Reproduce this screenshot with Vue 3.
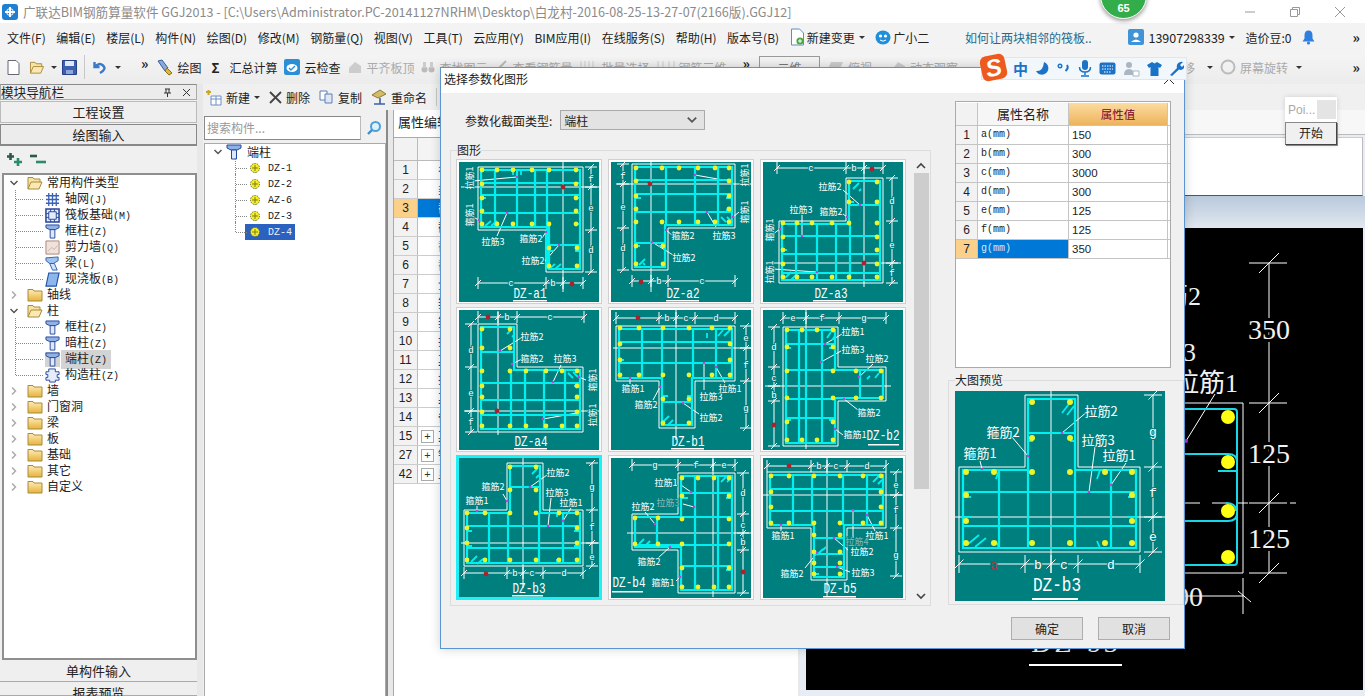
<template>
  <div class="app">
    <svg class="defs" width="0" height="0">
      <defs>
        <linearGradient id="fold" x1="0" y1="0" x2="0" y2="1"><stop offset="0" stop-color="#fdeeb4" /><stop offset="1" stop-color="#e8b13c" /></linearGradient>
      </defs>
      <symbol id="i-col" viewBox="0 0 16 16"><path d="M1 1h14v3l-4 2H5L1 4z" fill="#8fb0e8" stroke="#24499a" /><path d="M5.5 6h5v9h-5z" fill="#dfe8fa" stroke="#24499a" /></symbol>
      <symbol id="i-folder" viewBox="0 0 16 16"><path d="M1 4V2.5h5L7 4h8v10H1z" fill="url(#fold)" stroke="#a98a3b" /></symbol>
      <symbol id="i-open" viewBox="0 0 16 16"><path d="M1 14V2.5h5L7 4h6v3" fill="#f7e3a2" stroke="#a98a3b" /><path d="M1 14l3-7h11l-3 7z" fill="#fbe9b3" stroke="#a98a3b" /></symbol>
      <symbol id="i-grid" viewBox="0 0 16 16"><path d="M1 4h14M1 8h14M1 12h14M4 1v14M8 1v14M12 1v14" stroke="#3a62b4" stroke-width="1.4" fill="none" /></symbol>
      <symbol id="i-raft" viewBox="0 0 16 16"><path d="M1 1h14v14H1z" fill="#e4ecfa" stroke="#28459a" stroke-width="1.6" /><path d="M4 4h8v8H4zM1 6h3M12 6h3M1 10h3M12 10h3M6 1v3M10 1v3M6 12v3M10 12v3" fill="none" stroke="#28459a" /></symbol>
      <symbol id="i-wall" viewBox="0 0 16 16"><path d="M1 1h14v14H1z" fill="#eee2da" stroke="#a88478" /><path d="M3 12l4-4 3 2 3-4" fill="none" stroke="#c9b3aa" /></symbol>
      <symbol id="i-beam" viewBox="0 0 16 16"><path d="M1 2l13-1v4L9 8H5L1 5z" fill="#9ec3ee" stroke="#2d5fae" /><path d="M5 8h5l3 7H8z" fill="#cfe2f8" stroke="#2d5fae" /></symbol>
      <symbol id="i-slab" viewBox="0 0 16 16"><path d="M4 1h11l-3 14H1z" fill="#8db7ec" stroke="#1f4fa6" stroke-width="1.2" /></symbol>
      <symbol id="i-cons" viewBox="0 0 16 16"><path d="M4 1h7v3h4v3h-2v3h2v3h-4v2H5v-2H1v-3h2V7H1V4h3z" fill="#e5ecfa" stroke="#28459a" /></symbol>
      <symbol id="i-gear" viewBox="0 0 12 12"><circle cx="6" cy="6" r="4.5" fill="#f6f02c" stroke="#6d6d1c" stroke-dasharray="1.5 1" /><path d="M3 6h6M6 3v6" stroke="#7a7a20" /></symbol>
      <symbol id="i-caret" viewBox="0 0 10 10"><path d="M1.5 3l3.5 3.5L8.5 3" fill="none" stroke="#555" stroke-width="1.5" /></symbol>
      <symbol id="i-right" viewBox="0 0 10 10"><path d="M3 1.5L6.5 5 3 8.5" fill="none" stroke="#aaa" stroke-width="1.5" /></symbol>
    </svg>

    <!-- title bar -->
    <header class="title">
      <svg class="logo" width="16" height="16" viewBox="0 0 16 16"><rect width="16" height="16" rx="3" fill="#1f7fd0" /><path d="M3 8h10M8 3v10" stroke="#fff" stroke-width="2" /><circle cx="8" cy="8" r="3.4" fill="none" stroke="#fff" /></svg>
      <span class="title-text">广联达BIM钢筋算量软件 GGJ2013 - [C:\Users\Administrator.PC-20141127NRHM\Desktop\白龙村-2016-08-25-13-27-07(2166版).GGJ12]</span>
      <div class="win-btns">
        <svg width="12" height="12" viewBox="0 0 12 12"><path d="M1 6h10" stroke="#999" /></svg>
        <svg width="12" height="12" viewBox="0 0 12 12"><path d="M1.5 3.5h7v7h-7zM3.5 3.5v-2h7v7h-2" fill="none" stroke="#999" /></svg>
        <svg width="12" height="12" viewBox="0 0 12 12"><path d="M1 1l10 10M11 1L1 11" stroke="#999" /></svg>
      </div>
    </header>

    <!-- menu -->
    <nav class="menu">
      <span v-for="m in menus" :key="m">{{ m }}</span>
      <span class="menu-ic">
        <svg width="15" height="18" viewBox="0 0 15 18"><path d="M1.5 1h8l4 4v12h-12z" fill="#fff" stroke="#5b8fc7" /><circle cx="10" cy="13" r="3.6" fill="#4aa83f" /><path d="M10 11v4M8 13h4" stroke="#fff" /></svg>
        新建变更 <i class="drop"></i>
      </span>
      <span class="menu-ic">
        <svg width="16" height="15" viewBox="0 0 16 15"><ellipse cx="8" cy="7.5" rx="7.5" ry="7" fill="#1f8fdb" /><circle cx="5.5" cy="6" r="1.6" fill="#fff" /><circle cx="10.5" cy="6" r="1.6" fill="#fff" /><path d="M5 10q3 2.4 6 0" stroke="#fff" fill="none" /></svg>
        广小二
      </span>
      <span class="menu-link">如何让两块相邻的筏板..</span>
      <span class="menu-user">
        <svg width="16" height="16" viewBox="0 0 16 16"><rect width="16" height="16" rx="2" fill="#3f93d6" /><circle cx="8" cy="6" r="2.6" fill="#fff" /><path d="M3 13q5-5 10 0z" fill="#fff" /></svg>
        13907298339 <i class="drop"></i>
      </span>
      <span>造价豆:0</span>
      <svg width="13" height="15" viewBox="0 0 13 15"><path d="M6.5 0.5q4 0 4 5v3l2 3H0.5l2-3v-3q0-5 4-5z" fill="#2f7fe0" /><circle cx="6.5" cy="13" r="1.6" fill="#2f7fe0" /></svg>
      <b class="more end">»</b>
    </nav>

    <!-- toolbar -->
    <div class="tools">
      <svg width="13" height="15" viewBox="0 0 13 15"><path d="M1 .5h8l3 3v11H1z" fill="#fff" stroke="#667" /></svg>
      <svg class="t-open" width="18" height="15" viewBox="0 0 16 16"><use href="#i-open" /></svg>
      <i class="drop t-d1"></i>
      <svg class="t-save" width="15" height="15" viewBox="0 0 15 15"><path d="M.5.5h14v14H.5z" fill="#3c5fb0" stroke="#24408a" /><path d="M3 1h9v5H3z" fill="#dfe8f6" /><path d="M4 10h7v4H4z" fill="#8ea6d8" /></svg>
      <i class="sep"></i>
      <svg width="14" height="15" viewBox="0 0 14 15"><path d="M2.5 2v5h5M3 7q4-5 8-1.5T8 13" fill="none" stroke="#3a78c9" stroke-width="2.4" /></svg>
      <i class="drop t-d2"></i>
      <b class="more t-more">»</b>
      <span class="tool t1"><svg width="17" height="17" viewBox="0 0 17 17"><path d="M2 2l4-1 6 8-3 3z" fill="#8aaad8" stroke="#3a5a9c" /><path d="M11 9l5 5-3 2-4-4z" fill="#e0b83c" stroke="#8a6d1d" /></svg>绘图</span>
      <span class="tool t2"><b class="sigma">Σ</b>汇总计算</span>
      <span class="tool t3"><svg width="16" height="16" viewBox="0 0 16 16"><rect width="16" height="16" rx="2" fill="#2c8fd6" /><ellipse cx="8" cy="9" rx="5.5" ry="4" fill="#fff" /><path d="M5 9l2 2 4-4" fill="none" stroke="#2c8fd6" stroke-width="1.4" /></svg>云检查</span>
      <span class="tool dim t4"><svg width="14" height="14" viewBox="0 0 14 14"><path d="M1 8l6-6 6 4v7H1z" fill="#ccc" /></svg>平齐板顶</span>
      <span class="tool dim t5"><svg width="14" height="14" viewBox="0 0 14 14"><circle cx="3.5" cy="9.5" r="3" fill="#bbb" /><circle cx="10.5" cy="9.5" r="3" fill="#bbb" /><path d="M2 2h3v6H2zM9 2h3v6H9z" fill="#ccc" /></svg>查找图元</span>
      <span class="tool dim t6"><svg width="14" height="14" viewBox="0 0 14 14"><path d="M1 12L12 1" stroke="#bbb" stroke-width="2" /></svg>查看钢筋量</span>
      <span class="tool dim t7"><svg width="18" height="14" viewBox="0 0 18 14"><path d="M1 1v12h16M5 1v12M9 1v12M13 1v12" stroke="#ccc" fill="none" /></svg>批量选择</span>
      <span class="tool dim t8"><svg width="18" height="14" viewBox="0 0 18 14"><path d="M1 1v12h16V1M6 1v12M12 1v12" stroke="#ccc" fill="none" /></svg>钢筋三维</span>
      <b class="more t-more2">»</b>
      <span class="tool btn2d">二维</span>
      <span class="tool dim t9"><svg width="18" height="14" viewBox="0 0 18 14"><path d="M1 11l4-9h12l-4 9z" fill="#ccc" /></svg>俯视</span>
      <span class="tool dim t10"><svg width="15" height="14" viewBox="0 0 15 14"><path d="M1 10l6-8 7 4-2 7H2z" fill="#ccc" /></svg>动态观察</span>
      <span class="tool dim t12">平移 <i class="drop"></i></span>
      <span class="tool dim t13"><svg width="16" height="16" viewBox="0 0 16 16"><circle cx="8" cy="8" r="6.5" fill="none" stroke="#bbb" stroke-width="2" /></svg>屏幕旋转 <i class="drop"></i></span>
      <b class="more end">»</b>
    </div>

    <main class="main">
      <!-- left nav -->
      <aside class="nav">
        <div class="nav-head">
          <span>模块导航栏</span>
          <svg width="9" height="9" viewBox="0 0 9 9"><path d="M2 1h5M3 1v4M6 1v4M1 5h7M4.5 5v4" stroke="#333" fill="none" /></svg>
          <svg width="9" height="9" viewBox="0 0 9 9"><path d="M1 1l7 7M8 1L1 8" stroke="#333" /></svg>
        </div>
        <div class="nav-btn">工程设置</div>
        <div class="nav-btn on">绘图输入</div>
        <div class="nav-tools">
          <svg width="17" height="15" viewBox="0 0 17 15"><path d="M3.500 1v7M0 4.500h7" stroke="#2a5a4a" stroke-width="2.600" /><path d="M11 6v8M7 10h8" stroke="#2e8a6e" stroke-width="2.600" /></svg>
          <svg width="17" height="15" viewBox="0 0 17 15"><path d="M0 4h7" stroke="#2a5a4a" stroke-width="2.600" /><path d="M6 10h10" stroke="#2e8a6e" stroke-width="2.600" /></svg>
        </div>
        <div class="tree nav-tree">
          <div v-for="r in navTree" :key="r.id" class="row" :class="{ leaf: r.leaf, last: r.last, hot: r.hot }">
            <svg v-if="!r.leaf" class="caret" width="10" height="10"><use :href="r.open ? '#i-caret' : '#i-right'" /></svg>
            <svg class="ic" :width="r.leaf ? 15 : 16" :height="r.leaf ? 15 : 16"><use :href="'#' + r.icon" /></svg>
            <span class="lbl">{{ r.name }}<span class="mono">{{ r.key }}</span></span>
          </div>
        </div>
        <div class="nav-btn low">单构件输入</div>
        <div class="nav-btn low cut">报表预览</div>
      </aside>
      <div class="split"></div>

      <!-- component list + properties -->
      <section class="mid">
        <div class="mid-tools">
          <span class="tool"><svg width="17" height="17" viewBox="0 0 17 17"><path d="M1 3h5M3.500 1v5" stroke="#c9a62b" stroke-width="2" /><path d="M6 7h10v9H6z" fill="#fff" stroke="#6a8ec4" /><path d="M6 10h10M11 7v9" stroke="#6a8ec4" /></svg>新建<i class="drop"></i></span>
          <span class="tool"><svg width="13" height="13" viewBox="0 0 13 13"><path d="M1 1l11 11M12 1L1 12" stroke="#444" stroke-width="1.800" /></svg>删除</span>
          <span class="tool"><svg width="15" height="14" viewBox="0 0 15 14"><path d="M1 1h7v9H1z" fill="#fff" stroke="#5c7fb8" /><path d="M6 4h7v9H6z" fill="#dde7f6" stroke="#5c7fb8" /></svg>复制</span>
          <span class="tool"><svg width="16" height="16" viewBox="0 0 16 16"><path d="M1 6l8-5 6 4-8 4z" fill="#d7bd62" stroke="#8a7a3a" /><path d="M3 15h11M9 9v6" stroke="#3a62a8" stroke-width="1.6" /></svg>重命名</span>
          <i class="sep short"></i>
          <span class="tool">楼层</span>
        </div>
        <div class="mid-body">
          <div class="list">
            <div class="search">
              <span class="search-box">搜索构件...</span>
              <svg width="16" height="16" viewBox="0 0 16 16"><circle cx="9.500" cy="6.500" r="4.500" fill="#e0f0fb" stroke="#4aa0d8" stroke-width="2" /><path d="M6 10l-4 4" stroke="#3f8ec8" stroke-width="2.400" /></svg>
            </div>
            <div class="tree list-tree">
              <div class="row top">
                <svg class="caret" width="10" height="10"><use href="#i-caret" /></svg>
                <svg class="ic" width="16" height="16"><use href="#i-col" /></svg>
                <span class="lbl">端柱</span>
              </div>
              <div v-for="(c, i) in comps" :key="c" class="row kid" :class="{ last: i === comps.length - 1, sel: c === 'DZ-4' }">
                <svg class="ic" width="12" height="12"><use href="#i-gear" /></svg>
                <span class="mono">{{ c }}</span>
              </div>
            </div>
          </div>
          <div class="split thin"></div>
          <div class="props">
            <div class="props-tab">属性编辑</div>
            <div class="ptable">
              <div class="pt-head"><span class="pt-num"></span><span class="pt-name"></span></div>
              <div v-for="p in propRows" :key="p.n" class="pt-row" :class="{ cur: p.cur }">
                <span class="pt-num">{{ p.n }}</span>
                <span class="pt-name" :class="p.cls"><i v-if="p.plus" class="plus">+</i>{{ p.label }}</span>
              </div>
            </div>
          </div>
        </div>
      </section>
      <div class="split wide"></div>

      <!-- drawing side -->
      <section class="side">
        <div class="side-tools"></div>
        <div class="side-tab"></div>
        <div class="side-box"></div>
        <div class="side-grad"></div>
        <div class="canvas">
          <svg width="557" height="462" viewBox="806 227 557 462">
            <g fill="none" stroke="#fff">
              <path d="M1100 402H1243V572H1100" />
              <path d="M1249 262H1287M1249 402H1287M1249 572H1287M1249 502H1287M1269 262V572M1259 272L1279 252M1259 412L1279 392M1259 512L1279 492M1259 582L1279 562" />
              <path d="M1186 440L1215 393" />
              <path d="M1185 502H1200M1212 502H1226M1236 502H1248M1290 502H1296" />
              <path d="M1130 595H1243M1243 577V613M1238 590L1251 601" />
            </g>
            <g fill="none" stroke="#18d8e8" stroke-width="2">
              <path d="M1100 408H1234q3 0 3 3V561q0 3-3 3H1100" />
              <path d="M1100 453H1228q9 0 9 8M1100 520H1228q9 0 9-8" />
              <path d="M1218 470H1236M1226 502q10 0 10 8" />
            </g>
            <g fill="#ffff14">
              <circle cx="1228" cy="416" r="7" />
              <circle cx="1228" cy="461" r="7" />
              <circle cx="1228" cy="510" r="7" />
              <circle cx="1228" cy="556" r="7" />
            </g>
            <circle cx="1186" cy="440" r="2" fill="#b030e0" />
            <g class="cad-txt">
              <text x="1201" y="304" text-anchor="end">拉筋2</text>
              <text x="1196" y="360" text-anchor="end">拉筋3</text>
              <text x="1238" y="391" text-anchor="end">拉筋1</text>
              <text class="num" x="1269" y="338" text-anchor="middle">350</text>
              <text class="num" x="1269" y="462" text-anchor="middle">125</text>
              <text class="num" x="1269" y="547" text-anchor="middle">125</text>
              <text class="num nostroke" x="1203" y="605" text-anchor="end">300</text>
              <text class="num nostroke wide-name" x="1076" y="651" text-anchor="middle">DZ-b3</text>
            </g>
            <rect x="1029" y="663" width="93" height="2" fill="#fff" />
          </svg>
        </div>
      </section>
    </main>

    <!-- dialog -->
    <div class="dialog">
      <div class="dlg-title">
        <span>选择参数化图形</span>
        <svg width="12" height="12" viewBox="0 0 12 12"><path d="M1 1l10 10M11 1L1 11" stroke="#333" /></svg>
      </div>
      <div class="dlg-body">
        <div class="dlg-left">
          <div class="combo-row">
            <label>参数化截面类型:</label>
            <div class="combo">
              <span>端柱</span>
              <svg width="12" height="12"><use href="#i-caret" /></svg>
            </div>
          </div>
          <div class="group shapes">
            <span class="group-label">图形</span>
            <div class="thumbs">
              <div v-for="d in shapes" :key="d.name" class="thumb" :class="{ picked: d.name === 'DZ-b3' }">
                <Rebar :d="d" />
              </div>
            </div>
            <div class="vscroll">
              <svg width="12" height="8" viewBox="0 0 12 8"><path d="M2 6l4-4 4 4" fill="none" stroke="#444" stroke-width="1.6" /></svg>
              <div class="vtrack"><div class="vthumb"></div></div>
              <svg width="12" height="8" viewBox="0 0 12 8"><path d="M2 2l4 4 4-4" fill="none" stroke="#444" stroke-width="1.6" /></svg>
            </div>
          </div>
        </div>
        <div class="dlg-right">
          <div class="attr-panel">
            <div class="attr-row head">
              <span class="a-num"></span><span class="a-name">属性名称</span><span class="a-val">属性值</span>
            </div>
            <div v-for="(a, i) in attrs" :key="a.k" class="attr-row" :class="{ cur: i === attrs.length - 1 }">
              <span class="a-num">{{ i + 1 }}</span>
              <span class="a-name mono">{{ a.k }}(mm)</span>
              <span class="a-val">{{ a.v }}</span>
            </div>
          </div>
          <div class="group preview">
            <span class="group-label">大图预览</span>
            <Rebar :d="bigShape" />
          </div>
          <div class="dlg-btns">
            <button>确定</button>
            <button>取消</button>
          </div>
        </div>
      </div>
    </div>

    <!-- floating bits -->
    <div class="ball"><span>65</span></div>
    <div class="sogou">
      <span class="s-logo">S</span>
      <b class="s-zh">中</b>
      <svg width="15" height="15" viewBox="0 0 15 15"><path d="M9 1a6.500 6.500 0 1 1-8 9q7 1 8-9z" fill="#1b73c8" /></svg>
      <svg width="14" height="15" viewBox="0 0 14 15"><circle cx="3" cy="5" r="1.800" fill="none" stroke="#1b73c8" stroke-width="1.400" /><path d="M10 4q2 3-1.500 6" fill="none" stroke="#1b73c8" stroke-width="2" /></svg>
      <svg width="14" height="17" viewBox="0 0 14 17"><rect x="4" y="0" width="6" height="10" rx="3" fill="#1b73c8" /><path d="M1.500 7q0 5 5.500 5t5.500-5M7 12v3M3 16h8" fill="none" stroke="#1b73c8" stroke-width="1.500" /></svg>
      <svg width="17" height="13" viewBox="0 0 17 13"><rect x=".5" y=".5" width="16" height="12" rx="2" fill="#1b73c8" /><path d="M3 4h11M3 7h11M5 10h7" stroke="#fff" stroke-dasharray="1.500 1" /></svg>
      <svg width="17" height="16" viewBox="0 0 17 16"><circle cx="6" cy="4" r="3" fill="#aab6c2" /><path d="M1 14q0-6 5-6 3 0 4 2v4z" fill="#aab6c2" /><path d="M10 10h6v5h-6z" fill="#fff" stroke="#aab6c2" /></svg>
      <svg width="15" height="14" viewBox="0 0 15 14"><path d="M5 0l2.500 1.500L10 0l5 3-2 3-1.500-1v9h-8V5L2 6 0 3z" fill="#1b73c8" /></svg>
      <svg width="15" height="15" viewBox="0 0 15 15"><path d="M1 14l7-7q-1-4 2-5.500 2-1 4-.5l-3 3 2 2 3-3q.5 3-2 5-2 1.500-4 .5L3 15z" fill="#1b73c8" /></svg>
    </div>
    <div class="poi">
      <div class="poi-top"><span>Poi...</span><i></i></div>
      <div class="poi-btn">开始</div>
    </div>
  </div>
</template>

<script setup>
import { h } from 'vue'

const menus = ['文件(F)', '编辑(E)', '楼层(L)', '构件(N)', '绘图(D)', '修改(M)', '钢筋量(Q)', '视图(V)', '工具(T)', '云应用(Y)', 'BIM应用(I)', '在线服务(S)', '帮助(H)', '版本号(B)']

const navTree = [
  { name: '常用构件类型', icon: 'i-open', open: true },
  { name: '轴网', key: '(J)', icon: 'i-grid', leaf: true },
  { name: '筏板基础', key: '(M)', icon: 'i-raft', leaf: true },
  { name: '框柱', key: '(Z)', icon: 'i-col', leaf: true },
  { name: '剪力墙', key: '(Q)', icon: 'i-wall', leaf: true },
  { name: '梁', key: '(L)', icon: 'i-beam', leaf: true },
  { name: '现浇板', key: '(B)', icon: 'i-slab', leaf: true, last: true },
  { name: '轴线', icon: 'i-folder' },
  { name: '柱', icon: 'i-open', open: true },
  { name: '框柱', key: '(Z)', icon: 'i-col', leaf: true },
  { name: '暗柱', key: '(Z)', icon: 'i-col', leaf: true },
  { name: '端柱', key: '(Z)', icon: 'i-col', leaf: true, hot: true },
  { name: '构造柱', key: '(Z)', icon: 'i-cons', leaf: true, last: true },
  { name: '墙', icon: 'i-folder' },
  { name: '门窗洞', icon: 'i-folder' },
  { name: '梁', icon: 'i-folder' },
  { name: '板', icon: 'i-folder' },
  { name: '基础', icon: 'i-folder' },
  { name: '其它', icon: 'i-folder' },
  { name: '自定义', icon: 'i-folder' }
].map((r, i) => ({ ...r, id: i }))

const comps = ['DZ-1', 'DZ-2', 'AZ-6', 'DZ-3', 'DZ-4']

const propRows = [
  { n: 1, label: '名称', cls: 'blue' },
  { n: 2, label: '类别', cls: 'blue' },
  { n: 3, label: '截面编辑', cur: true },
  { n: 4, label: '截面形状' },
  { n: 5, label: '截面宽', cls: 'gray' },
  { n: 6, label: '截面高', cls: 'gray' },
  { n: 7, label: '全部纵筋', cls: 'blue' },
  { n: 8, label: '箍筋', cls: 'navy' },
  { n: 9, label: '箍筋肢数', cls: 'navy' },
  { n: 10, label: '拉筋', cls: 'navy' },
  { n: 11, label: '其它箍筋', cls: 'navy' },
  { n: 12, label: '拉筋', cls: 'navy' },
  { n: 13, label: '其它', cls: 'navy' },
  { n: 14, label: '备注' },
  { n: 15, label: '其它属性', plus: true },
  { n: 27, label: '锚固搭接', plus: true },
  { n: 42, label: '显示样式', plus: true }
]

const attrs = [
  { k: 'a', v: 150 }, { k: 'b', v: 300 }, { k: 'c', v: 3000 }, { k: 'd', v: 300 },
  { k: 'e', v: 125 }, { k: 'f', v: 125 }, { k: 'g', v: 350 }
]

// rows x columns of yellow bar dots
const pts = (xs, ys) => xs.flatMap(x => ys.map(y => [x, y]))

const shapes = [
  {
    name: 'DZ-a1', nx: 71, ny: 136, ul: [54, 88, 138],
    outer: 'M19 5H124V110H87V68H19Z',
    bars: 'M22 8H121V107H90V65H22ZM36 8V65M58 8V65M76 8V65M88 8V107M22 21H121M22 33H121M22 51H121M90 83H121',
    hooks: 'M26 64l6-5M32 64l6-5M90 107l6-5M96 107l6-5M54 8v5M62 8v5M22 36h5M116 36h5M116 62h5M90 89h5M116 89h5',
    dots: [...pts([23, 38, 54, 73, 90, 117], [8, 62]), ...pts([23, 117], [22, 36, 49]), ...pts([90, 118], [86, 104])],
    red: [[104, 25], [113, 122]],
    center: 'M104 0V130M2 25H140',
    dimV: [{ p: 132, t: [5, 25, 68, 110], l: [[17, 'f'], [46, 'e'], [88, 'd']] }],
    dimH: [{ p: 121, t: [19, 87, 104, 124], l: [[52, 'c'], [94, 'b']] }],
    labels: [[11, 16, '拉筋1', 1], [11, 53, '箍筋1', 1], [34, 80, '拉筋3'], [72, 77, '箍筋2'], [74, 99, '拉筋2']],
    leads: [[58, 15, 14, 19], [20, 58, 14, 55], [48, 51, 38, 74], [87, 70, 83, 76], [100, 83, 86, 99]]
  },
  {
    name: 'DZ-a2', nx: 72, ny: 136, ul: [55, 88, 138],
    outer: 'M21 2H124V66H57V108H21Z',
    bars: 'M24 5H121V63H54V105H24ZM55 5V63M84 5V63M107 5V63M24 18H121M24 32H121M24 50H121M24 81H54',
    hooks: 'M115 60l-5-5M121 60l-5-5M28 103l6-6M34 103l-2-2M24 36h6M115 36h6M115 48h6M24 84h5M48 84h5',
    dots: [...pts([25, 51, 68, 87, 104, 118], [6, 60]), ...pts([25, 118], [19, 34, 47]), ...pts([25, 52], [84, 102])],
    red: [[39, 22], [30, 120]],
    center: 'M40 0V130M5 22H140',
    dimV: [{ p: 12, t: [2, 22, 66, 108], l: [[14, 'f'], [45, 'e'], [86, 'd']] }],
    dimH: [{ p: 119, t: [21, 40, 57, 124], l: [[48, 'b'], [91, 'c']] }],
    labels: [[134, 13, '拉筋1', 1], [134, 50, '箍筋1', 1], [72, 74, '箍筋2'], [113, 74, '拉筋3'], [73, 96, '拉筋2']],
    leads: [[84, 13, 118, 19], [96, 50, 105, 65], [122, 55, 128, 50], [55, 68, 62, 74], [41, 80, 62, 93]]
  },
  {
    name: 'DZ-a3', nx: 68, ny: 136, ul: [50, 83, 138],
    outer: 'M83 16H120V121H16V59H83Z',
    bars: 'M86 19H117V118H19V62H86ZM33 62V118M54 62V118M73 62V118M87 62V118M19 74H117M19 92H117M19 111H117M86 43H117',
    hooks: 'M90 27l6-6M96 29l2-2M22 116l6-6M28 118l6-6M86 40h5M112 40h5M112 88h5M19 88h5M87 111v6',
    dots: [...pts([20, 34, 49, 69, 86, 114], [61, 115]), ...pts([20, 114], [75, 88, 102]), ...pts([86, 114], [20, 40])],
    red: [[101, 101], [109, 7]],
    center: 'M101 0V125M10 101H138',
    dimV: [{ p: 129, t: [16, 59, 101, 121], l: [[39, 'd'], [83, 'e'], [111, 'f']] }],
    dimH: [{ p: 6, t: [14, 83, 101, 120], l: [[48, 'c'], [91, 'b']] }],
    labels: [[67, 25, '拉筋2'], [38, 48, '拉筋3'], [68, 50, '箍筋2'], [7, 68, '箍筋1', 1], [7, 110, '拉筋1', 1]],
    leads: [[97, 43, 80, 28], [39, 74, 39, 53], [84, 55, 80, 52], [17, 67, 10, 72], [54, 110, 10, 107]]
  },
  {
    name: 'DZ-a4', nx: 72, ny: 136, ul: [55, 88, 138],
    outer: 'M19 14H58V57H124V122H19Z',
    bars: 'M22 17H55V60H121V119H22ZM52 60V119M66 60V119M85 60V119M106 60V119M22 42H55M22 73H121M22 90H121M22 105H121',
    hooks: 'M48 24l4-4M53 27l2-2M119 67l-5-5M114 68l-5-5M22 42h4M50 42h4M115 76h6M115 90h6',
    dots: [...pts([23, 51], [19, 38]), ...pts([23, 51, 67, 87, 103, 118], [61, 116]), ...pts([23, 118], [76, 87, 102])],
    red: [[38, 101], [29, 7]],
    center: 'M39 2V125M5 101H140',
    dimV: [{ p: 12, t: [14, 57, 101, 122], l: [[40, 'd'], [83, 'e'], [112, 'f']] }],
    dimH: [{ p: 7, t: [19, 39, 58, 125], l: [[48, 'b'], [91, 'c']] }],
    labels: [[73, 27, '拉筋2'], [73, 49, '箍筋2'], [106, 49, '拉筋3'], [134, 70, '箍筋1', 1], [134, 105, '拉筋1', 1]],
    leads: [[41, 41, 62, 28], [53, 54, 63, 49], [94, 72, 102, 55], [120, 67, 127, 70], [84, 109, 118, 103]]
  },
  {
    name: 'DZ-b1', nx: 77, ny: 136, ul: [60, 93, 138],
    outer: 'M5 16H124V71H84V118H48V71H5Z',
    bars: 'M8 19H121V68H81V115H51V68H8ZM31 19V68M51 19V68M82 19V68M105 19V68M8 32H121M8 53H121M51 92H81',
    hooks: 'M113 26l6-6M107 26l5-6M96 23v5M52 112l6-6M57 115l5-5M52 86h5M76 86h5M8 50h5',
    dots: [...pts([9, 28, 52, 78, 101, 119], [18, 65]), ...pts([9, 119], [34, 50]), ...pts([52, 78], [89, 113])],
    red: [[27, 8]],
    center: 'M65 0V130M2 38H140',
    dimV: [{ p: 135, t: [16, 38, 71, 118], l: [[28, 'e'], [55, 'f'], [98, 'g']] }],
    dimH: [{ p: 8, t: [5, 48, 65, 84, 124], l: [[56, 'b'], [75, 'c'], [105, 'd']] }],
    labels: [[22, 79, '箍筋1'], [35, 95, '箍筋2'], [100, 87, '拉筋3'], [119, 79, '拉筋1'], [100, 108, '拉筋2']],
    leads: [[19, 68, 19, 74], [49, 77, 42, 90], [93, 53, 93, 80], [105, 57, 114, 73], [72, 93, 88, 104]]
  },
  {
    name: 'DZ-b2', nx: 120, ny: 130, ul: [105, 136, 134],
    outer: 'M20 17H75V57H123V91H75V136H20Z',
    bars: 'M23 20H72V60H120V88H72V133H23ZM36 20V133M43 20V133M59 20V133M97 60V88M23 34H72M23 60H72M23 89H72M23 108H72',
    hooks: 'M64 28l4-6M69 30l3-4M112 68l4-5M107 66l-3 3M23 38h5M66 38h5M23 110h5M66 110h5',
    dots: [...pts([24, 70], [20, 37, 61, 88, 112, 130]), ...pts([39, 54], [20, 130]), ...pts([93, 118], [61, 88])],
    red: [[11, 115]],
    center: 'M43 0V139M2 76H128',
    dimV: [{ p: 11, t: [17, 57, 76, 91, 136], l: [[37, 'd'], [68, 'c'], [85, 'b']] }],
    dimH: [{ p: 8, t: [20, 43, 76, 123], l: [[30, 'e'], [59, 'f'], [101, 'g']] }],
    labels: [[90, 22, '拉筋1'], [90, 40, '拉筋3'], [114, 49, '拉筋2'], [106, 103, '箍筋2'], [92, 125, '箍筋1']],
    leads: [[62, 34, 79, 24], [58, 52, 78, 41], [96, 67, 110, 54], [81, 89, 95, 100], [72, 119, 80, 125]]
  },
  {
    name: 'DZ-b3', nx: 70, ny: 135, ul: [53, 84, 137],
    outer: 'M48 5H84V52H124V108H5V52H48Z',
    bars: 'M51 8H81V55H121V105H8V55H51ZM30 55V105M49 55V105M80 55V105M104 55V105M51 29H81M8 68H121M8 90H121',
    hooks: 'M73 16l6-6M77 20l3-3M98 55v4M30 55v4M12 104l6-6M18 106l6-5M98 105v-4M30 105v-4M8 73h5M115 73h5M8 88h5M115 88h5',
    dots: [...pts([51, 77], [9, 32]), ...pts([8, 26, 51, 77, 100, 118], [55, 102]), ...pts([8, 118], [70, 85])],
    red: [[27, 116]],
    center: 'M64 0V130M2 85H140',
    dimV: [{ p: 133, t: [5, 52, 85, 108], l: [[29, 'g'], [69, 'f'], [99, 'e']] }],
    dimH: [{ p: 115, t: [5, 48, 64, 84, 124], l: [[56, 'b'], [73, 'c'], [105, 'd']] }],
    labels: [[99, 15, '拉筋2'], [34, 29, '箍筋2'], [98, 35, '拉筋3'], [18, 43, '箍筋1'], [112, 45, '拉筋1']],
    leads: [[71, 29, 88, 17], [48, 43, 44, 36], [89, 68, 92, 40], [104, 63, 112, 50], [18, 53, 18, 48]]
  },
  {
    name: 'DZ-b4', nx: 18, ny: 129, ul: [1, 32, 133],
    outer: 'M67 15H124V135H67V92H21V56H67Z',
    bars: 'M70 18H121V132H70V89H24V59H70ZM84 18V132M107 18V132M46 59V89M70 35H121M24 59H121M24 87H121M70 108H121',
    hooks: 'M110 24l5-5M116 24l4-4M28 86l5-5M34 88l5-5M71 40h6M115 40h6M71 108h6M115 112h6',
    dots: [...pts([71, 118], [20, 38, 61, 86, 110, 129]), ...pts([87, 103], [20, 129]), ...pts([24, 47], [60, 86])],
    red: [[132, 114]],
    center: 'M102 0V139M16 75H140',
    dimV: [{ p: 132, t: [15, 56, 75, 92, 135], l: [[35, 'd'], [67, 'c'], [84, 'b']] }],
    dimH: [{ p: 7, t: [21, 67, 102, 124], l: [[44, 'g'], [85, 'f'], [113, 'e']] }],
    labels: [[55, 25, '拉筋1'], [57, 45, '拉筋3', 0, 1], [32, 49, '拉筋2'], [38, 104, '箍筋2'], [52, 125, '箍筋1']],
    leads: [[80, 34, 70, 27], [83, 49, 72, 46], [44, 66, 34, 54], [59, 89, 47, 100], [69, 119, 65, 123]]
  },
  {
    name: 'DZ-b5', nx: 77, ny: 135, ul: [60, 93, 138],
    outer: 'M4 14H123V70H84V122H48V70H4Z',
    bars: 'M7 17H120V67H81V119H51V67H7ZM30 17V67M49 17V67M80 17V67M104 17V67M7 31H120M7 53H120M51 80H81M51 96H81M51 109H81',
    hooks: 'M110 24l6-6M115 26l4-4M54 97l6-6M60 92l3-3M51 80h5M76 80h5M51 116h5M76 116h5',
    dots: [...pts([8, 26, 51, 77, 100, 118], [18, 65]), ...pts([8, 118], [34, 49]), ...pts([51, 77], [77, 94, 105, 116])],
    red: [[26, 8]],
    center: 'M64 0V139M0 37H140',
    dimV: [{ p: 133, t: [14, 37, 70, 118], l: [[27, 'e'], [52, 'f'], [97, 'g']] }],
    dimH: [{ p: 8, t: [4, 48, 64, 84, 123], l: [[56, 'b'], [73, 'c'], [104, 'd']] }],
    labels: [[20, 78, '箍筋1'], [114, 78, '拉筋1'], [94, 84, '拉筋4', 0, 1], [99, 94, '拉筋2'], [100, 115, '拉筋3'], [29, 116, '箍筋2']],
    leads: [[18, 67, 18, 73], [104, 57, 112, 73], [90, 52, 90, 80], [71, 80, 85, 92], [74, 109, 87, 114], [54, 95, 42, 110]]
  }
]

const bigShape = {
  name: 'DZ-b3', size: 210, nx: 102, ny: 200, ul: [77, 123, 207], k: 1.5,
  outer: 'M70 4H123V76H185V161H4V76H70Z',
  bars: 'M73 8H120V79H181V157H8V79H73ZM44 79V157M73 79V157M120 79V157M156 79V157M73 42H120M8 101H181M8 135H181',
  hooks: 'M107 22l7-9M112 24l7-9M44 79l-3 9M145 79l-3 9M12 154l12-10M20 156l11-9M44 157l-3-7M145 157l-3-7M8 106h8M173 106h8M8 126h8M173 126h8M73 50h5M115 50h5',
  dots: [...pts([77, 115], [11, 47]), ...pts([11, 39, 77, 115, 150, 177], [81, 152]), ...pts([11, 177], [104, 130])],
  red: [],
  center: 'M96 0V182M0 126H210',
  dimV: [{ p: 198, t: [4, 76, 126, 161], l: [[40, 'g'], [101, 'f'], [145, 'e']] }],
  dimH: [{ p: 173, t: [4, 70, 96, 123, 185], l: [[39, 'a', '#b0303a'], [83, 'b'], [109, 'c'], [156, 'd']] }],
  labels: [[146, 20, '拉筋2'], [48, 41, '箍筋2'], [143, 49, '拉筋3'], [25, 62, '箍筋1'], [164, 64, '拉筋1']],
  leads: [[107, 42, 133, 20], [73, 65, 57, 46], [134, 101, 140, 56], [156, 94, 171, 72], [27, 78, 25, 70]]
}

// one section sketch, drawn in pixels of its own box
const Rebar = ({ d }) => {
  const size = d.size || 140
  const big = size > 140
  const k = d.k || 1
  const teal = '#007f7f'
  let ticks = ''
  const kids = []
  const dimText = (x, y, t, fill) => h('text', {
    x, y: y + (big ? 4.5 : 3), 'text-anchor': 'middle', fill: fill || '#fff', stroke: teal, 'stroke-width': 2,
    'paint-order': 'stroke', 'font-size': big ? 13 : 9, 'font-family': 'Liberation Mono, monospace'
  }, t)
  const dimLabels = []
  for (const v of d.dimV || []) {
    ticks += `M${v.p} ${v.t[0]}V${v.t[v.t.length - 1]}`
    for (const t of v.t) ticks += `M${v.p - 6 * k} ${t}h${12 * k}M${v.p - 3 * k} ${t + 3 * k}l${6 * k} ${-6 * k}`
    for (const [pos, s] of v.l) dimLabels.push(dimText(v.p, pos, s))
  }
  for (const v of d.dimH || []) {
    ticks += `M${v.t[0]} ${v.p}H${v.t[v.t.length - 1]}`
    for (const t of v.t) ticks += `M${t} ${v.p - 6 * k}v${12 * k}M${t - 3 * k} ${v.p + 3 * k}l${6 * k} ${-6 * k}`
    for (const [pos, s, fill] of v.l) dimLabels.push(dimText(pos, v.p, s, fill))
  }
  const leads = d.leads.map(l => `M${l[0]} ${l[1]}L${l[2]} ${l[3]}`).join('')
  kids.push(h('path', { d: d.outer + d.center + ticks + leads, fill: 'none', stroke: '#fff', 'stroke-width': 1 }))
  kids.push(h('path', { d: d.bars, fill: 'none', stroke: '#00f0f0', 'stroke-width': 2.2 }))
  kids.push(h('path', { d: d.hooks, fill: 'none', stroke: '#00f0f0', 'stroke-width': 1.8 }))
  for (const [cx, cy] of d.dots) kids.push(h('circle', { cx, cy, r: big ? 3 : 2.4, fill: '#ecf42c' }))
  for (const [cx, cy] of d.red) kids.push(h('circle', { cx, cy, r: 2.4, fill: '#b0202c' }))
  for (const l of d.leads) kids.push(h('circle', { cx: l[0], cy: l[1], r: 1.3, fill: '#c040e0' }))
  kids.push(...dimLabels)
  for (const [x, y, t, rot, faint] of d.labels) {
    kids.push(h('text', {
      x, y: y + (big ? 5 : 3), 'text-anchor': 'middle', fill: faint ? '#8fb8b8' : '#fff', stroke: teal, 'stroke-width': 1.4,
      'paint-order': 'stroke', 'font-size': big ? 13 : 9, 'font-family': 'Noto Sans CJK SC, sans-serif',
      transform: rot ? `rotate(-90 ${x} ${y})` : null
    }, t))
  }
  kids.push(h('text', {
    x: d.nx, y: d.ny, 'text-anchor': 'middle', fill: '#fff', 'font-size': big ? 20 : 14,
    textLength: big ? 48 : 33, lengthAdjust: 'spacingAndGlyphs', 'font-family': 'Liberation Mono, monospace'
  }, d.name))
  kids.push(h('rect', { x: d.ul[0], y: d.ul[2], width: d.ul[1] - d.ul[0], height: big ? 2 : 1.500, fill: '#fff' }))
  return h('svg', { width: size, height: size, viewBox: `0 0 ${size} ${size}`, style: `background:#007f7f;display:block` }, kids)
}
</script>

<style scoped>
.app {
  position: relative;
  width: 1365px;
  height: 696px;
  overflow: hidden;
  display: flex;
  flex-direction: column;
  background: #f0f0f0;
  color: #222;
  font: 12px "Noto Sans CJK SC", "Liberation Sans", sans-serif;
}
.defs { position: absolute; }
svg { flex-shrink: 0; }
.mono { font-family: "Liberation Mono", "Noto Sans CJK SC", monospace; font-size: 10px; }

/* title */
.title {
  height: 23px;
  background: #fff;
  display: flex;
  align-items: center;
  padding-left: 2px;
  color: #8a8a8a;
}
.logo { margin-right: 5px; }
.title-text { font-size: 12.6px; white-space: nowrap; }
.win-btns { margin-left: auto; display: flex; gap: 33px; padding-right: 19px; }

/* menu */
.menu {
  height: 31px;
  box-sizing: border-box;
  padding: 0 0 3px 7px;
  background: #f3f3f3;
  display: flex;
  align-items: center;
  gap: 10.6px;
  white-space: nowrap;
}
.menu-ic { display: flex; align-items: center; gap: 2px; }
.menu-ic .drop { margin-left: 2px; }
.menu-link { color: #1f6b8f; margin-left: 25px; width: 153px; }
.menu-user { display: flex; align-items: center; gap: 4px; font-size: 12.5px; }
.menu-user .drop { margin-left: 0; }
.drop {
  display: inline-block;
  border: 3px solid transparent;
  border-top: 3.5px solid #333;
  border-bottom: 0;
  margin-left: 4px;
  vertical-align: middle;
}
.more { font-size: 14px; line-height: 1; color: #222; }
.end { margin-left: auto; padding-right: 5px; }

/* tools */
.tools {
  height: 30px;
  box-sizing: border-box;
  padding: 0 0 4px 7px;
  background: linear-gradient(#f4f4f4, #ececec);
  display: flex;
  align-items: center;
  white-space: nowrap;
}
.tool { display: inline-flex; align-items: center; gap: 4px; }
.dim { color: #aaa; }
.sep { width: 1px; height: 24px; background: #c8c8c8; margin: 0 7px; }
.sep.short { height: 18px; margin: 0; }
.t-open { margin-left: 8px; }
.t-d1 { margin-left: 5px; }
.t-save { margin-left: 5px; }
.t-d2 { margin-left: 9px; }
.t-more { margin-left: 20px; align-self: flex-start; margin-top: 2px; }
.t-more2 { margin-left: 16px; align-self: flex-start; margin-top: 2px; }
.t1 { margin-left: 8px; }
.t2 { margin-left: 10px; }
.sigma { width: 14px; font-size: 13px; margin-right: 0; }
.t3 { margin-left: 7px; }
.t4 { margin-left: 8px; }
.t5 { margin-left: 7px; }
.t6 { margin-left: 7px; }
.t7 { margin-left: 7px; }
.t8 { margin-left: 7px; }
.btn2d { margin-left: 9px; width: 61px; height: 23px; border: 1px solid #999; justify-content: center; color: #777; box-sizing: border-box; }
.t9 { margin-left: 6px; }
.t10 { margin-left: 19px; }
.t12 { margin-left: 213px; }
.t12 .drop { margin-left: 8px; }
.t13 { margin-left: 7px; }

/* main split */
.main { flex: 1; display: flex; min-height: 0; }
.split { width: 6px; background: #e8e8e8; }
.split.thin { width: 7px; border-left: 2px solid #8a8a8a; box-sizing: border-box; }
.split.wide { width: 2px; }

/* nav */
.nav { width: 197px; display: flex; flex-direction: column; overflow: hidden; background: #f0f0f0; }
.nav-head {
  height: 16px;
  box-sizing: border-box;
  border: 1px solid #aaa;
  border-top-color: #8a8a8a;
  background: #ececec;
  display: flex;
  align-items: center;
  gap: 10px;
  padding-right: 5px;
  font-size: 12.6px;
  line-height: 14px;
}
.nav-head span { margin-right: auto; }
.nav-btn {
  height: 22px;
  line-height: 19px;
  text-align: center;
  font-size: 13px;
  background: #efefef;
  border: 1px solid #bbb;
  margin-top: 1px;
  box-sizing: border-box;
}
.nav-btn.on { height: 22px; border: 1px solid #888; border-bottom-width: 2px; background: #ececec; }
.nav-btn.low { border: 0; border-bottom: 1px solid #aaa; margin: 0; flex-shrink: 0; line-height: 22px; }
.nav-btn.cut { height: 14px; }
.nav-tools { height: 27px; display: flex; align-items: center; gap: 6px; padding-left: 7px; flex-shrink: 0; }
.tree { background: #fff; box-sizing: border-box; }
.nav-tree {
  flex: 1;
  margin-left: 2px;
  border: 2px solid #8f8f8f;
  border-bottom-width: 2px;
  padding-top: 0;
  min-height: 0;
}
.row { position: relative; height: 16px; display: flex; align-items: center; white-space: nowrap; }
.nav-tree .row { padding-left: 5px; }
.caret { margin-right: 8px; }
.nav-tree .row .ic { margin-right: 4px; }
.nav-tree .row.leaf { padding-left: 41px; }
.nav-tree .row.leaf .ic { margin-right: 5px; }
.lbl { line-height: 16px; }
.row.leaf::before {
  content: "";
  position: absolute;
  left: 11px;
  top: -1px;
  height: 17px;
  border-left: 1px dotted #888;
}
.row.leaf.last::before { height: 9px; }
.row.leaf::after {
  content: "";
  position: absolute;
  left: 12px;
  top: 8px;
  width: 27px;
  border-top: 1px dotted #888;
}
.row.hot .lbl { background: #d3d3d3; padding: 0 4px; margin-left: -4px; }
.row.hot .ic { background: #d3d3d3; }

/* mid */
.mid { width: 595px; display: flex; flex-direction: column; background: #f0f0f0; }
.mid-tools { height: 26px; display: flex; align-items: center; gap: 9px; padding-left: 2px; white-space: nowrap; overflow: hidden; }
.mid-tools .tool { gap: 4px; }
.mid-tools .drop { margin-left: 0; }
.mid-body { flex: 1; display: flex; min-height: 0; }
.list { width: 183px; display: flex; flex-direction: column; }
.search { height: 33px; display: flex; align-items: center; gap: 4px; padding: 3px 0 0 1px; box-sizing: border-box; flex-shrink: 0; }
.search-box {
  width: 157px;
  height: 24px;
  box-sizing: border-box;
  border: 1px solid #888;
  border-right-color: #bbb;
  background: #fff;
  color: #999;
  line-height: 22px;
  padding-left: 2px;
  font-size: 12px;
  margin-right: 1px;
}
.list-tree { flex: 1; margin-left: 1px; border: 1px solid #aaa; border-bottom: 0; }
.list-tree .row.top { padding-left: 8px; }
.list-tree .row.top .caret { margin-right: 3px; }
.list-tree .row.top .ic { margin-right: 5px; }
.row.kid { padding-left: 44px; gap: 7px; }
.row.kid::before {
  content: "";
  position: absolute;
  left: 30px;
  top: -2px;
  height: 18px;
  border-left: 1px dotted #888;
}
.row.kid.last::before { height: 10px; }
.row.kid::after {
  content: "";
  position: absolute;
  left: 31px;
  top: 8px;
  width: 11px;
  border-top: 1px dotted #888;
}
.row.kid.sel { background: linear-gradient(90deg, transparent 40px, #2b62c0 40px, #2b62c0 90px, transparent 90px); }
.row.kid.sel .mono { color: #e8f0ff; }

.props { flex: 1; background: #fff; border-left: 1px solid #aaa; }
.props-tab {
  height: 25px;
  margin-top: 2px;
  width: 60px;
  line-height: 20px;
  padding-left: 4px;
  background: #fff;
  font-size: 13px;
}
.ptable { border-top: 1px solid #aaa; margin-top: 0; }
.pt-head, .pt-row { display: flex; }
.pt-head { height: 23px; background: #f4f4f4; border-bottom: 1px solid #bbb; box-sizing: border-box; }
.pt-row { height: 19px; border-bottom: 1px solid #ccc; box-sizing: border-box; line-height: 18px; }
.pt-num { width: 23px; text-align: center; background: #f2f2f2; border-right: 1px solid #bbb; font-family: "Liberation Sans", sans-serif; flex-shrink: 0; }
.pt-row.cur .pt-num { background: #fbd08a; }
.pt-name { flex: 1; padding-left: 20px; position: relative; white-space: nowrap; }
.pt-row.cur .pt-name { background: #0078d7; color: #fff; }
.pt-name.blue { color: #2040c0; }
.pt-name.navy { color: #000090; }
.pt-name.gray { color: #888; }
.plus {
  position: absolute;
  left: 3px;
  top: 3px;
  width: 11px;
  height: 11px;
  border: 1px solid #aaa;
  font: 11px/11px "Liberation Sans", sans-serif;
  text-align: center;
  color: #333;
}

/* drawing side */
.side { flex: 1; display: flex; flex-direction: column; min-width: 0; background: #e8ecf4; }
.side-tools { height: 26px; background: #f0f0f0; flex-shrink: 0; }
.side-tab { height: 24px; background: #f7f7f7; border-bottom: 1px solid #bbb; flex-shrink: 0; }
.side-box { height: 59px; background: #fff; border: 1px solid #bbb; border-top: 1px solid #ccc; border-bottom: 1px solid #555; box-sizing: border-box; margin: 2px 2px 0 0; flex-shrink: 0; }
.side-grad { height: 32px; background: linear-gradient(#b9c9dc, #e0e7ef); flex-shrink: 0; }
.canvas { height: 462px; margin-left: 6px; width: 557px; background: #000; flex-shrink: 0; }
.canvas svg { display: block; }
.cad-txt text { font: 26px "Liberation Serif", "Noto Sans CJK SC", serif; fill: #f2f2f2; }
.cad-txt .num { font-size: 28px; stroke: #000; stroke-width: 6px; paint-order: stroke; }
.cad-txt .nostroke { stroke: none; }
.cad-txt .wide-name { letter-spacing: 3px; }

/* dialog */
.dialog {
  position: absolute;
  left: 440px;
  top: 67px;
  width: 745px;
  height: 582px;
  box-sizing: border-box;
  border: 1px solid #5b95cf;
  background: #f0f0f0;
  box-shadow: 0 0 10px rgba(0, 0, 0, 0.18);
  display: flex;
  flex-direction: column;
}
.dlg-title {
  height: 25px;
  background: #fff;
  display: flex;
  align-items: center;
  justify-content: space-between;
  padding: 0 9px 4px 3px;
  box-sizing: border-box;
  flex-shrink: 0;
}
.dlg-body { flex: 1; display: flex; min-height: 0; }
.dlg-left { width: 481px; margin-left: 9px; }
.combo-row { display: flex; align-items: center; gap: 8px; margin-top: 17px; padding-left: 15px; height: 20px; font-size: 12px; }
.combo {
  width: 145px;
  height: 20px;
  box-sizing: border-box;
  background: #e3e3e3;
  border: 1px solid #aaa;
  display: flex;
  align-items: center;
  justify-content: space-between;
  padding: 0 6px 0 3px;
}
.group { position: relative; box-sizing: border-box; border: 1px solid #dcdcdc; }
.group-label { position: absolute; left: 6px; top: -9px; background: #f0f0f0; line-height: 16px; font-size: 12px; }
.shapes { margin-top: 20px; height: 456px; display: flex; padding: 8px 0 0 5px; }
.thumbs { display: grid; grid-template-columns: repeat(3, 146px); grid-auto-rows: 145px; gap: 3px 6px; height: 441px; }
.thumb {
  box-sizing: border-box;
  padding: 2px;
  border: 1px solid #d0d0d0;
  background: #fff;
  overflow: hidden;
}
.thumb.picked { border: 3px solid #1ff0f5; padding: 0; }
.vscroll { width: 18px; margin-left: 6px; display: flex; flex-direction: column; align-items: center; height: 441px; padding-top: 3px; box-sizing: border-box; }
.vtrack { flex: 1; width: 15px; margin: 3px 0; }
.vthumb { width: 15px; height: 316px; background: #cdcdcd; }
.dlg-right { margin-left: 17px; width: 236px; display: flex; flex-direction: column; }
.attr-panel {
  margin: 8px 0 0 7px;
  width: 216px;
  height: 267px;
  box-sizing: border-box;
  background: #fff;
  border: 1px solid #aaa;
  padding: 1px 0 0 0;
  flex-shrink: 0;
}
.attr-row {
  display: grid;
  grid-template-columns: 22px 91px 99px;
  height: 19px;
  line-height: 18px;
  box-sizing: border-box;
  border-bottom: 1px solid #c4c4c4;
}
.attr-row > span { border-right: 1px solid #c4c4c4; padding-left: 3px; box-sizing: border-box; }
.attr-row.head { height: 23px; line-height: 22px; font-size: 13px; }
.attr-row.head span { text-align: center; padding: 0; }
.attr-row.head .a-num, .a-num { background: #f2f2f2; text-align: center; padding: 0 !important; font-family: "Liberation Sans", sans-serif; }
.attr-row.head .a-name { background: #f6f6f6; }
.attr-row.head .a-val { background: linear-gradient(#fbdca0, #eeb35c); color: #7a0030; }
.a-val { font-family: "Liberation Sans", sans-serif; font-size: 11.5px; }
.attr-row.head .a-val, .attr-row.head .a-name { font-family: "Noto Sans CJK SC", sans-serif; }
.attr-row.cur .a-num { background: #fbd08a; }
.attr-row.cur .a-name { background: #0078d7; color: #cfe8ff; }
.preview { margin-top: 12px; height: 225px; padding: 10px 0 0 6px; flex-shrink: 0; }
.dlg-btns { display: flex; justify-content: flex-end; gap: 15px; padding: 12px 14px 0 0; }
.dlg-btns button {
  width: 72px;
  height: 23px;
  background: #e1e1e1;
  border: 1px solid #adadad;
  font: 12px "Noto Sans CJK SC", sans-serif;
  color: #222;
  padding: 0;
}

/* floating */
.ball {
  position: absolute;
  left: 1100px;
  top: -28px;
  width: 47px;
  height: 47px;
  border-radius: 50%;
  background: #33ad4a;
  border: 1px solid #fff;
  box-sizing: border-box;
  box-shadow: 0 2px 4px rgba(0, 0, 0, 0.4);
  color: #fff;
  text-align: center;
}
.ball span { position: absolute; left: 0; right: 0; bottom: 4px; font: bold 11px "Liberation Sans", sans-serif; }
.sogou {
  position: absolute;
  left: 981px;
  top: 57px;
  width: 206px;
  height: 23px;
  box-sizing: border-box;
  background: #f2f7fb;
  border: 1px solid #dfe6ec;
  display: flex;
  align-items: center;
  gap: 7px;
}
.s-logo {
  width: 25px;
  height: 25px;
  margin: -2px 0 0 -1px;
  border-radius: 6px;
  background: #ee5a1e;
  color: #fff;
  font: italic bold 24px/25px "Liberation Sans", sans-serif;
  text-align: center;
  transform: rotate(-12deg);
}
.s-zh { color: #1b73c8; font-size: 15px; }
.poi {
  position: absolute;
  left: 1285px;
  top: 97px;
  width: 52px;
  background: #fff;
  box-shadow: 0 0 5px rgba(0, 0, 0, 0.15);
}
.poi-top { height: 25px; display: flex; align-items: center; justify-content: space-between; padding: 0 1px 0 3px; color: #aaa; font: 12px "Liberation Sans", sans-serif; }
.poi-top i { width: 19px; height: 19px; background: #e4e4e4; }
.poi-btn {
  height: 23px;
  line-height: 20px;
  box-sizing: border-box;
  text-align: center;
  background: #f0f0f0;
  border: 1px solid;
  border-color: #888 #444 #444 #888;
  box-shadow: 1px 1px 0 #888;
}
</style>

<style>
html, body { margin: 0; overflow: hidden; }
</style>
